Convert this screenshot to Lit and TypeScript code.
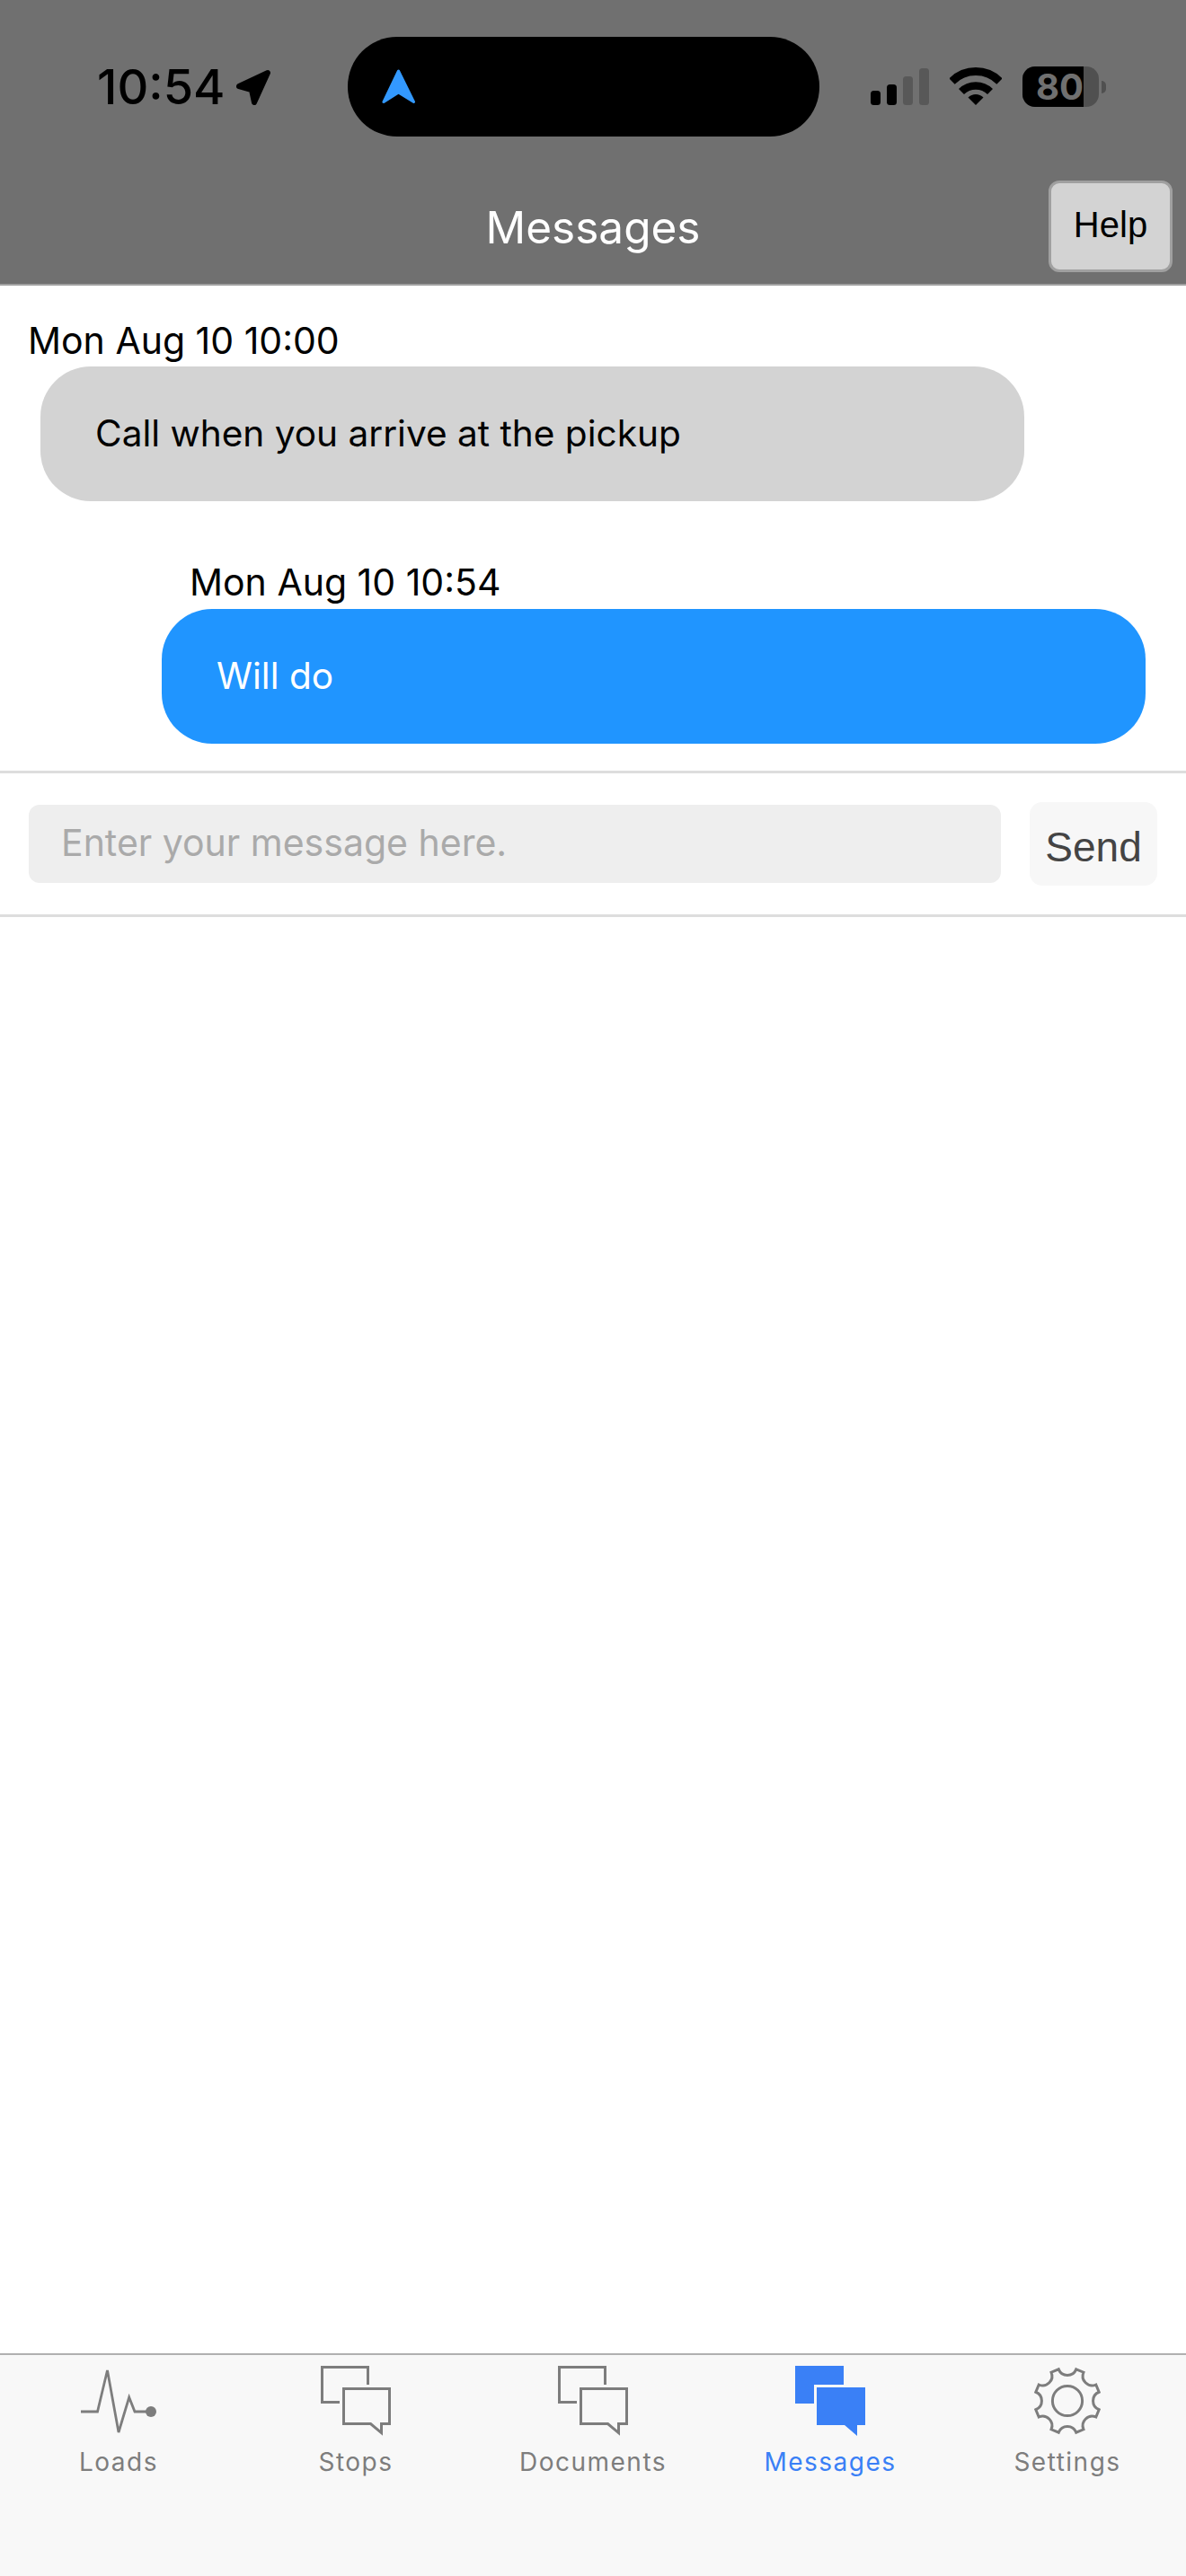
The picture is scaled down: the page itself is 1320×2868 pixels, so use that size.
import { LitElement, html, css, svg } from "lit";
import { customElement } from "lit/decorators.js";

const gearPath = (() => {
  const R = 36.5, c = 39, half = 7;
  let d = "";
  for (let i = 0; i < 8; i++) {
    const a = 22.5 + 45 * i - 90;
    const p = (deg: number) => {
      const r = (deg * Math.PI) / 180;
      return `${(c + R * Math.cos(r)).toFixed(2)} ${(c + R * Math.sin(r)).toFixed(2)}`;
    };
    d += `${i === 0 ? "M" : "A10.5 10.5 0 0 0 "}${p(a - half)} L${p(a + half)} `;
  }
  const r0 = ((22.5 - half - 90) * Math.PI) / 180;
  d += `A10.5 10.5 0 0 0 ${(c + R * Math.cos(r0)).toFixed(2)} ${(c + R * Math.sin(r0)).toFixed(2)}Z`;
  return d;
})();

const chatOutline = svg`<svg class="ic" width="78" height="78" viewBox="0 0 78 78" fill="none" stroke="currentColor" stroke-width="3">
  <path d="M52.5 21V1.5H1.5V40.5H21"/>
  <path d="M25.5 25.5H76.5V64.5H67.5V74.6L55.5 64.5H25.5Z"/>
</svg>`;

const chatFilled = svg`<svg class="ic" width="78" height="78" viewBox="0 0 78 78" fill="currentColor">
  <path d="M0 0H54V21H21V42H0Z"/>
  <path d="M24 24H78V66H69V78L55 66H24Z"/>
</svg>`;

const loadsIcon = svg`<svg class="ic" width="84" height="78" viewBox="0 0 84 78" fill="none" stroke="currentColor" stroke-width="2.8">
  <path d="M0 51H18.5L29.5 5L42 74L53.7 35L60 51H78"/>
  <circle cx="78" cy="51" r="6" fill="currentColor" stroke="none"/>
</svg>`;

const gearIcon = svg`<svg class="ic" width="78" height="78" viewBox="0 0 78 78" fill="none" stroke="currentColor" stroke-width="3">
  <path d="${gearPath}"/>
  <circle cx="39" cy="39" r="16.6"/>
</svg>`;

@customElement("app-root")
export class AppRoot extends LitElement {
  static styles = css`
    :host {
      display: flex;
      flex-direction: column;
      min-height: 2868px;
      background: #fff;
      font-family: Inter, "Liberation Sans", sans-serif;
    }
    svg { display: block; flex: none; }
    .header {
      background: #707070;
      border-bottom: 2px solid #a0a0a0;
      display: flex;
      flex-direction: column;
      padding-top: 41px;
      box-sizing: content-box;
      height: 275px;
    }
    .status {
      display: grid;
      grid-template-columns: 387px 525px 1fr;
      height: 111px;
    }
    .st-left {
      display: flex;
      align-items: center;
      padding-left: 108px;
      gap: 12px;
    }
    .time {
      font-size: 54px;
      font-weight: 500;
      color: #000;
      line-height: 60px;
    }
    .island {
      background: #000;
      border-radius: 55px;
      display: flex;
      align-items: center;
      padding-left: 38px;
    }
    .st-right {
      display: flex;
      align-items: center;
      padding-left: 57px;
      gap: 23px;
    }
    .battery {
      display: flex;
      align-items: center;
      gap: 3px;
    }
    .bat-body {
      width: 85px;
      height: 45px;
      border-radius: 14px;
      background: #505050;
    }
    .bat-fill {
      width: 68px;
      height: 45px;
      background: #000;
      border-radius: 14px 0 0 14px;
      color: #707070;
      font-size: 40px;
      font-weight: 700;
      line-height: 45px;
      text-align: right;
      white-space: nowrap;
    }
    .bat-nub {
      width: 5px;
      height: 14px;
      background: #505050;
      border-radius: 0 7px 7px 0;
    }
    .nav {
      display: grid;
      grid-template-columns: 1fr auto 1fr;
      align-items: center;
      margin-top: 49px;
      height: 102px;
    }
    .title {
      grid-column: 2;
      color: #fff;
      font-size: 49.5px;
      font-weight: 400;
      line-height: 58px;
      margin-top: 2px;
    }
    .help {
      grid-column: 3;
      justify-self: end;
      margin-right: 15px;
      width: 138px;
      height: 102px;
      box-sizing: border-box;
      background: #d3d3d3;
      border: 3px solid #a0a0a0;
      border-radius: 12px;
      font-family: "Liberation Sans", Arial, sans-serif;
      font-size: 40px;
      color: #000;
      padding: 0 0 3px;
    }
    .thread {
      height: 540px;
      box-sizing: border-box;
      padding-top: 34px;
    }
    .date {
      font-size: 41px;
      line-height: 54px;
      margin-bottom: 2px;
      color: #000;
    }
    .bubble {
      width: 1095px;
      height: 150px;
      box-sizing: border-box;
      border-radius: 56px;
      display: flex;
      align-items: center;
      padding-left: 61px;
      font-size: 40.6px;
      line-height: 48px;
    }
    .them .date { margin-left: 31px; }
    .them .bubble { margin-left: 45px; background: #d3d3d3; color: #000; }
    .me { margin-top: 63px; }
    .me .date { margin-left: 211px; margin-bottom: 3px; }
    .me .bubble { margin-left: 180px; background: #2095ff; color: #fff; }
    .compose {
      height: 157px;
      border-top: 3px solid #ddd;
      border-bottom: 3px solid #ddd;
      display: flex;
      align-items: center;
      padding: 0 32px;
      gap: 32px;
    }
    .input {
      width: 1082px;
      height: 87px;
      box-sizing: border-box;
      border: 0;
      outline: 0;
      background: #eee;
      border-radius: 12px;
      padding: 0 36px 4px;
      font-family: inherit;
      font-size: 41px;
      color: #000;
    }
    .input::placeholder { color: #aaa; opacity: 1; }
    .send {
      width: 142px;
      height: 93px;
      border: 0;
      border-radius: 14px;
      background: #f7f7f7;
      color: #444;
      font-family: "Liberation Sans", Arial, sans-serif;
      font-size: 46px;
      padding: 6px 0 0;
    }
    .spacer { flex: 1; }
    .tabs {
      height: 246px;
      box-sizing: content-box;
      border-top: 2px solid #b0b0b0;
      background: #f8f8f8;
      display: grid;
      grid-template-columns: repeat(5, 1fr);
    }
    .tab {
      display: flex;
      flex-direction: column;
      align-items: center;
      padding-top: 12px;
      color: #7d7d7d;
      font-size: 28px;
      letter-spacing: 1.5px;
      line-height: 34px;
    }
    .tab.active { color: #3a80f6; }
    .tab span { margin-top: 12px; }
    .loc { margin-top: 1px; }
  `;

  render() {
    const tabs = [
      { label: "Loads", icon: loadsIcon },
      { label: "Stops", icon: chatOutline },
      { label: "Documents", icon: chatOutline },
      { label: "Messages", icon: chatFilled, active: true },
      { label: "Settings", icon: gearIcon },
    ];
    return html`
      <header class="header">
        <div class="status">
          <div class="st-left">
            <span class="time">10:54</span>
            <svg class="loc" width="40" height="41" viewBox="0 0 40 41">
              <path d="M4 19L36 4L21 37L18 23Z" fill="#000" stroke="#000" stroke-width="6" stroke-linejoin="round"/>
            </svg>
          </div>
          <div class="island">
            <svg width="38" height="41" viewBox="0 0 38 41">
              <path d="M18.5 3L2 37.5L18.5 27L35.5 37.5Z" fill="#39f" stroke="#39f" stroke-width="3" stroke-linejoin="round"/>
            </svg>
          </div>
          <div class="st-right">
            <svg width="65" height="42" viewBox="0 0 65 42">
              <rect x="0" y="25" width="11" height="16" rx="3.5" fill="#000"/>
              <rect x="18" y="18" width="11" height="23" rx="3.5" fill="#000"/>
              <rect x="36" y="9" width="11" height="32" rx="3.5" fill="#585858"/>
              <rect x="54" y="0" width="11" height="41" rx="3.5" fill="#585858"/>
            </svg>
            <svg width="58" height="43" viewBox="0 0 58 43" fill="none" stroke="#000">
              <path d="M2.5 15.5A37.5 37.5 0 0 1 55.5 15.5" stroke-width="9"/>
              <path d="M13 27A22.8 22.8 0 0 1 45 27" stroke-width="8.5"/>
              <path d="M29 42L20.5 33.5A12 12 0 0 1 37.5 33.5Z" fill="#000" stroke="none"/>
            </svg>
            <div class="battery">
              <div class="bat-body"><div class="bat-fill">80</div></div>
              <div class="bat-nub"></div>
            </div>
          </div>
        </div>
        <div class="nav">
          <div class="title">Messages</div>
          <button class="help">Help</button>
        </div>
      </header>
      <section class="thread">
        <div class="them">
          <div class="date">Mon Aug 10 10:00</div>
          <div class="bubble">Call when you arrive at the pickup</div>
        </div>
        <div class="me">
          <div class="date">Mon Aug 10 10:54</div>
          <div class="bubble">Will do</div>
        </div>
      </section>
      <section class="compose">
        <input class="input" placeholder="Enter your message here." />
        <button class="send">Send</button>
      </section>
      <div class="spacer"></div>
      <nav class="tabs">
        ${tabs.map(
          (t) => html`<div class="tab ${t.active ? "active" : ""}">${t.icon}<span>${t.label}</span></div>`
        )}
      </nav>
    `;
  }
}
